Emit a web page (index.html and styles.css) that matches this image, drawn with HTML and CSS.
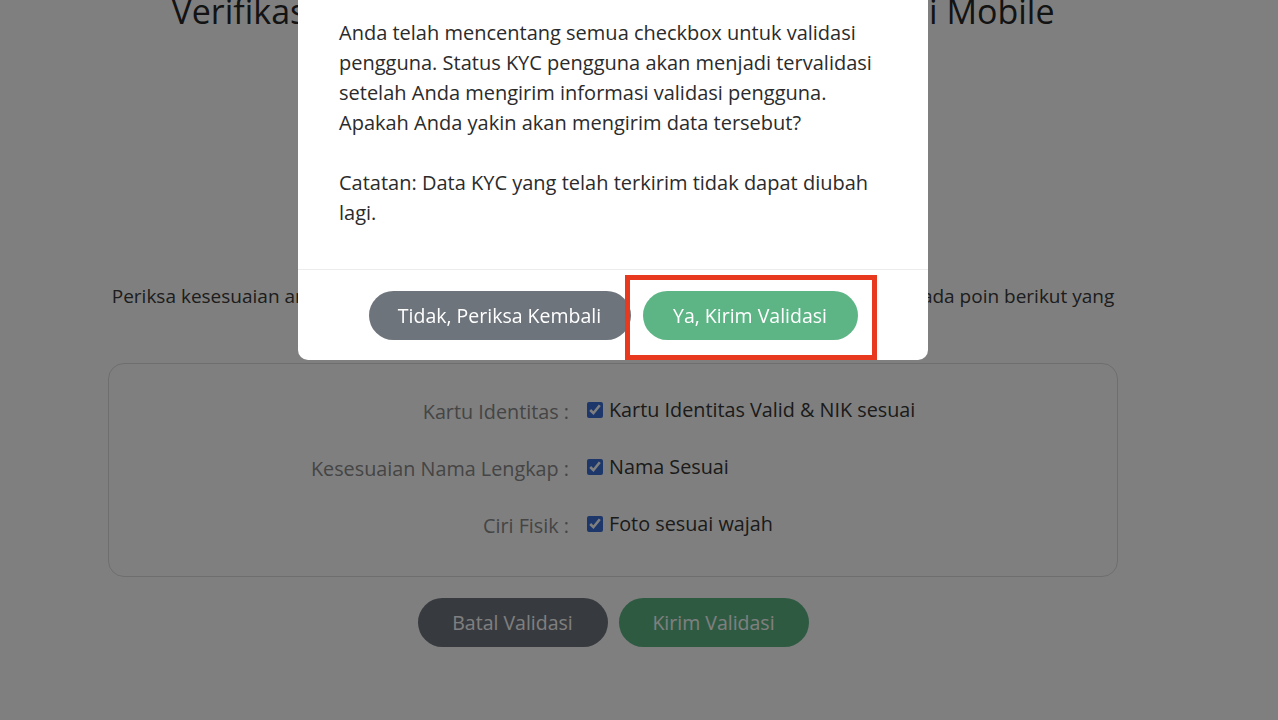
FILE: index.html
```html
<!DOCTYPE html>
<html lang="id">
<head>
    <meta charset="UTF-8">
    <meta name="viewport" content="width=device-width, initial-scale=1.0">
    <title>Verifikasi KYC</title>
    <link rel="stylesheet" href="styles.css">
</head>
<body>
    <div class="page">
        <h1>Verifikasi Data KYC Pengguna Baru pada Aplikasi Mobile</h1>

        <p class="intro">Periksa kesesuaian antara data pengguna dengan kartu identitas dan foto wajah. Centang pada poin berikut yang sesuai dengan data pengguna.</p>

        <div class="card">
            <div class="row">
                <span class="label">Kartu Identitas :</span>
                <label class="value"><input type="checkbox" checked> Kartu Identitas Valid &amp; NIK sesuai</label>
            </div>
            <div class="row">
                <span class="label">Kesesuaian Nama Lengkap :</span>
                <label class="value"><input type="checkbox" checked> Nama Sesuai</label>
            </div>
            <div class="row">
                <span class="label">Ciri Fisik :</span>
                <label class="value"><input type="checkbox" checked> Foto sesuai wajah</label>
            </div>
        </div>

        <div class="actions">
            <button class="btn btn-grey">Batal Validasi</button>
            <button class="btn btn-green">Kirim Validasi</button>
        </div>
    </div>

    <div class="overlay"></div>

    <div class="modal">
        <div class="modal-body">
            <p>Anda telah mencentang semua checkbox untuk validasi pengguna. Status KYC pengguna akan menjadi tervalidasi setelah Anda mengirim informasi validasi pengguna. Apakah Anda yakin akan mengirim data tersebut?</p>
            <p>Catatan: Data KYC yang telah terkirim tidak dapat diubah lagi.</p>
        </div>
        <div class="modal-footer">
            <button class="btn btn-grey">Tidak, Periksa Kembali</button>
            <button class="btn btn-green">Ya, Kirim Validasi</button>
            <div class="highlight"></div>
        </div>
    </div>
</body>
</html>
```

FILE: styles.css
```css
body {
    margin: 0;
    background-color: #FFFFFF;
    font-family: "Open Sans", Lato, sans-serif;
    color: #333333;
    overflow: hidden;
}

.page {
    width: 1010px;
    margin-left: 108px;
    text-align: center;
}

h1 {
    font-size: 34px;
    font-weight: 400;
    line-height: 40px;
    color: #262626;
    white-space: nowrap;
    margin: -9px 0 0 0;
}

.intro {
    font-size: 19px;
    line-height: 28px;
    color: #3a3a3a;
    margin: 251px 0 0 0;
}

.card {
    margin-top: 25px;
    border: 1px solid #dcdcdc;
    border-radius: 16px;
    padding: 30px 0 40px 0;
    display: flex;
    flex-direction: column;
    gap: 29px;
}

.row {
    display: grid;
    grid-template-columns: 460px 1fr;
    column-gap: 18px;
    align-items: center;
    height: 28px;
}

.label {
    text-align: right;
    font-size: 19.8px;
    color: #8a8a8a;
    padding-top: 4px;
}

.value {
    text-align: left;
    font-size: 19.8px;
    color: #363636;
    display: flex;
    align-items: center;
    gap: 6px;
}

.value input {
    margin: 0;
    width: 16px;
    height: 16px;
    accent-color: #3b6fd4;
}

.actions {
    display: flex;
    justify-content: center;
    gap: 11px;
    margin-top: 21px;
}

.btn {
    font-family: inherit;
    font-size: 19.5px;
    color: #FFFFFF;
    border: none;
    border-radius: 25px;
    height: 49px;
    padding: 0;
    cursor: pointer;
}

.actions .btn {
    width: 190px;
}

.btn-grey {
    background-color: #6e747c; /* slate grey */
}

.btn-green {
    background-color: #5db585; /* soft green */
}

.overlay {
    position: fixed;
    inset: 0;
    background-color: rgba(0, 0, 0, 0.5);
}

.modal {
    position: absolute;
    left: 298px;
    top: -10px;
    width: 630px;
    background-color: #FFFFFF;
    border-radius: 10px;
}

.modal-body {
    padding: 28px 41px 41px 41px;
    font-size: 20px;
    line-height: 30px;
    color: #2b2b2b;
}

.modal-body p {
    margin: 0;
}

.modal-body p + p {
    margin-top: 30px;
}

.modal-footer {
    position: relative;
    border-top: 1px solid #ececec;
    display: flex;
    justify-content: center;
    gap: 12px;
    padding: 21px 0 20px 0;
}

.modal-footer .btn-grey {
    width: 262px;
}

.modal-footer .btn-green {
    width: 215px;
}

.highlight {
    position: absolute;
    left: 327px;
    top: 5px;
    width: 242px;
    height: 75px;
    border: 5px solid #e8391f;
}
```
